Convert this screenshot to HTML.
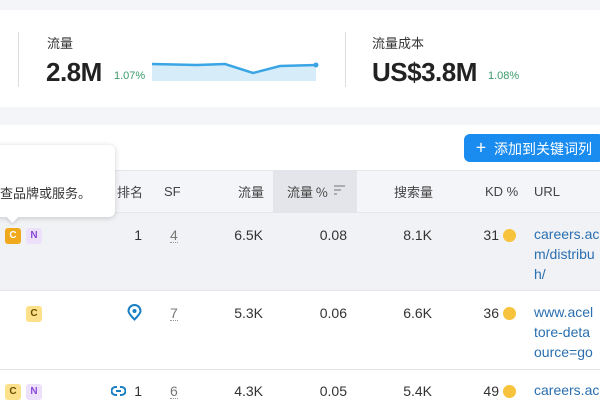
<!DOCTYPE html>
<html><head><meta charset="utf-8"><style>
*{margin:0;padding:0;box-sizing:border-box}
body{width:600px;height:400px;overflow:hidden;background:#f4f5f9;font-family:"Liberation Sans","Noto Sans CJK SC",sans-serif;position:relative;color:#333}
.a{position:absolute;white-space:nowrap}
.cjk{font-family:"Noto Sans CJK SC",sans-serif}
.badge{position:absolute;width:16px;height:16px;border-radius:3px;font-size:10px;font-weight:bold;text-align:center;line-height:16px}
.c1{background:#f0a81c;color:#fff}
.c2{background:#fde08a;color:#6b4e00}
.n{background:#ece0fb;color:#8a4bd6}
.num{position:absolute;font-size:14px;color:#333;text-align:right;width:60px}
.dot{position:absolute;width:13px;height:13px;border-radius:50%;background:#f7c33c}
.url{position:absolute;font-size:14px;color:#2a6fb0;line-height:20px;white-space:nowrap}
.sf{position:absolute;font-size:14px;color:#777;border-bottom:1px dotted #999;line-height:14px}
.h{position:absolute;font-size:13px;color:#444;white-space:nowrap}
</style></head><body>
<div class="a" style="left:0;top:10px;width:600px;height:97px;background:#fff"></div>
<div class="a" style="left:18px;top:32px;width:1px;height:55px;background:#ddd"></div>
<div class="a" style="left:345px;top:32px;width:1px;height:55px;background:#ddd"></div>
<div class="a cjk" style="left:47px;top:33px;font-size:13px;color:#333">流量</div>
<div class="a" style="left:46px;top:57px;font-size:26px;font-weight:bold;color:#222;letter-spacing:-0.5px">2.8M</div>
<div class="a" style="left:114px;top:70px;font-size:11px;color:#3a9a6a">1.07%</div>
<svg class="a" style="left:150px;top:58px" width="172" height="24"><path d="M2 6 L47 7 L75 6 L103 15 L130 8 L166 7 L166 23 L2 23Z" fill="#d6ecf9"/><path d="M2 6 L47 7 L75 6 L103 15 L130 8 L166 7" stroke="#3aa5e4" stroke-width="2.5" fill="none"/><circle cx="166" cy="7" r="2.5" fill="#3aa5e4"/></svg>
<div class="a cjk" style="left:372px;top:33px;font-size:13px;color:#333">流量成本</div>
<div class="a" style="left:372px;top:57px;font-size:26px;font-weight:bold;color:#222;letter-spacing:-0.5px">US$3.8M</div>
<div class="a" style="left:488px;top:70px;font-size:11px;color:#3a9a6a">1.08%</div>
<div class="a" style="left:0;top:125px;width:600px;height:275px;background:#fff"></div>
<div class="a cjk" style="left:464px;top:134px;width:140px;height:28px;background:#1a8cf0;border-radius:6px;color:#fff;font-size:14px;line-height:27px;padding-left:12px"><span style="font-size:18px;margin-right:8px">+</span>添加到关键词列</div>
<div class="a" style="left:0;top:170px;width:600px;height:43px;background:#f4f5f9;border-top:1px solid #e6e7ea;border-bottom:1px solid #e6e7ea"></div>
<div class="a" style="left:273px;top:170px;width:84px;height:43px;background:#e4e5ea"></div>
<div class="h cjk" style="left:117px;top:182px">排名</div>
<div class="h" style="left:164px;top:184px">SF</div>
<div class="h cjk" style="left:238px;top:182px">流量</div>
<div class="h cjk" style="left:287px;top:182px">流量 %</div>
<svg class="a" style="left:333px;top:184px" width="14" height="12"><path d="M1 2h11M1 6h7M1 10h3" stroke="#999" stroke-width="1.6"/></svg>
<div class="h cjk" style="left:394px;top:182px">搜索量</div>
<div class="h" style="left:485px;top:184px">KD %</div>
<div class="h" style="left:534px;top:184px">URL</div>
<div class="a" style="left:0;top:213px;width:600px;height:78px;background:#f1f2f5;border-bottom:1px solid #e3e4e8"></div>
<div class="a" style="left:0;top:369px;width:600px;height:1px;background:#e3e4e8"></div>
<!-- row1 -->
<div class="badge c1" style="left:5px;top:228px">C</div>
<div class="badge n" style="left:26px;top:228px">N</div>
<div class="num" style="left:82px;top:227px">1</div>
<div class="sf" style="left:170px;top:228px">4</div>
<div class="num" style="left:203px;top:227px">6.5K</div>
<div class="num" style="left:287px;top:227px">0.08</div>
<div class="num" style="left:372px;top:227px">8.1K</div>
<div class="num" style="left:439px;top:227px">31</div>
<div class="dot" style="left:503px;top:229px"></div>
<div class="url" style="left:534px;top:224px">careers.ac<br>m/distribu<br>h/</div>
<!-- row2 -->
<div class="badge c2" style="left:26px;top:306px">C</div>
<svg class="a" style="left:126px;top:304px" width="17" height="17"><path d="M8.5 15.5 C3.5 10.5 2.5 8.5 2.5 7 A6 6 0 0 1 14.5 7 C14.5 8.5 13.5 10.5 8.5 15.5Z" fill="none" stroke="#1a7ec4" stroke-width="2"/><circle cx="8.5" cy="7" r="2" fill="#1a7ec4"/></svg>
<div class="sf" style="left:170px;top:306px">7</div>
<div class="num" style="left:203px;top:305px">5.3K</div>
<div class="num" style="left:287px;top:305px">0.06</div>
<div class="num" style="left:372px;top:305px">6.6K</div>
<div class="num" style="left:439px;top:305px">36</div>
<div class="dot" style="left:503px;top:307px"></div>
<div class="url" style="left:534px;top:302px">www.acel<br>tore-deta<br>ource=go</div>
<!-- row3 -->
<div class="badge c2" style="left:5px;top:384px">C</div>
<div class="badge n" style="left:26px;top:384px">N</div>
<svg class="a" style="left:111px;top:385px" width="15" height="12"><path d="M6 2H4.5a4 4 0 0 0 0 8H6M9 2h1.5a4 4 0 0 1 0 8H9M5 6h5" fill="none" stroke="#1a7ec4" stroke-width="2"/></svg>
<div class="num" style="left:82px;top:383px">1</div>
<div class="sf" style="left:170px;top:384px">6</div>
<div class="num" style="left:203px;top:383px">4.3K</div>
<div class="num" style="left:287px;top:383px">0.05</div>
<div class="num" style="left:372px;top:383px">5.4K</div>
<div class="num" style="left:439px;top:383px">49</div>
<div class="dot" style="left:503px;top:385px"></div>
<div class="url" style="left:534px;top:380px">careers.ac</div>
<!-- tooltip -->
<div class="a" style="left:-6px;top:145px;width:121px;height:72px;background:#fff;border-radius:6px;box-shadow:0 1px 6px rgba(0,0,0,.18)"></div>
<div class="a" style="left:8px;top:212px;width:9px;height:9px;background:#fff;transform:rotate(45deg);box-shadow:2px 2px 3px rgba(0,0,0,.1)"></div>
<div class="a cjk" style="left:0;top:183px;font-size:13px;color:#333">查品牌或服务。</div>
</body></html>
